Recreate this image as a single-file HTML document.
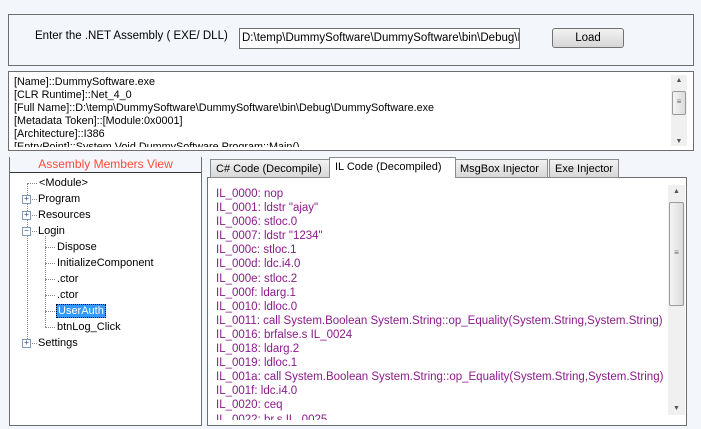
<!DOCTYPE html>
<html><head><style>
body{margin:0;width:701px;height:429px;background:#f3f6fb;font-family:"Liberation Sans",sans-serif;position:relative;overflow:hidden;font-size:11px;color:#000}
.a{position:absolute}
.box{position:absolute;border:1px solid #6e6e6e;box-sizing:border-box}
.sb{position:absolute;background:#f0f0f0}
.arr{position:absolute;left:0;width:100%;text-align:center;font-size:7px;color:#555}
.thumb{position:absolute;left:1px;right:1px;border:1px solid #9a9a9a;border-radius:2px;background:linear-gradient(90deg,#f4f4f4,#dcdcdc)}
.tab{position:absolute;top:159px;height:19px;border:1px solid #8c8c8c;background:linear-gradient(#f2f2f2,#d8d8d8);box-sizing:border-box;font-size:11px;padding:3px 0 0 5px;white-space:nowrap}
.code div{height:14.1px;line-height:14px;white-space:nowrap}
.tr{position:absolute;font-size:11px;white-space:nowrap}
.pm{position:absolute;width:7px;height:7px;border:1px solid #7f9db9;background:#fff;font-size:8px;line-height:6px;text-align:center;color:#1a3c8c}
.dv{position:absolute;border-left:1px dotted #888}
.dh{position:absolute;border-top:1px dotted #888}
</style></head><body>
<div class="box" style="left:8px;top:14px;width:686px;height:52px"></div>
<div class="a" style="left:35px;top:30px;font-size:11.5px">Enter the .NET Assembly ( EXE/ DLL)</div>
<div class="box" style="left:239px;top:28px;width:281px;height:21px;background:#fff;padding:3px 0 0 2px;overflow:hidden;white-space:nowrap;font-size:11.5px">D:\temp\DummySoftware\DummySoftware\bin\Debug\Du</div>
<div class="a" style="left:552px;top:28px;width:72px;height:20px;border:1px solid #707070;border-radius:3px;background:linear-gradient(#f2f2f2,#d6d6d6);box-sizing:border-box;text-align:center;line-height:18px;font-size:11.5px">Load</div>

<div class="box" style="left:8px;top:71px;width:686px;height:80px;background:#fff"></div>
<div class="a" style="left:14px;top:76px;line-height:13px;font-size:10.8px;height:71px;overflow:hidden;white-space:nowrap">[Name]::DummySoftware.exe<br>[CLR Runtime]::Net_4_0<br>[Full Name]::D:\temp\DummySoftware\DummySoftware\bin\Debug\DummySoftware.exe<br>[Metadata Token]::[Module:0x0001]<br>[Architecture]::I386<br>[EntryPoint]::System.Void DummySoftware.Program::Main()</div>
<div class="sb" style="left:671px;top:75px;width:16px;height:71px"><div class="arr" style="top:2px">▲</div><div class="thumb" style="top:16px;height:22px;text-align:center;font-size:8px;line-height:20px;color:#666">≡</div><div class="arr" style="bottom:1px">▼</div></div>

<div class="box" style="left:9px;top:157px;width:193px;height:269px;background:#fff"></div>
<div class="a" style="left:10px;top:157px;width:191px;height:15px;background:#f3f6fb;border-bottom:1px solid #333;text-align:center;color:#ff4a3a;font-size:12px;line-height:15px">Assembly Members View</div>
<div class="dv" style="left:27px;top:183px;height:162px"></div>
<div class="dh" style="left:27px;top:183px;width:10px"></div>
<div class="tr" style="left:39px;top:177px">&lt;Module&gt;</div>
<div class="pm" style="left:22px;top:195px">+</div><div class="dh" style="left:32px;top:199px;width:5px"></div><div class="tr" style="left:38px;top:193px">Program</div>
<div class="pm" style="left:22px;top:211px">+</div><div class="dh" style="left:32px;top:215px;width:5px"></div><div class="tr" style="left:38px;top:209px">Resources</div>
<div class="pm" style="left:22px;top:227px">−</div><div class="dh" style="left:32px;top:231px;width:5px"></div><div class="tr" style="left:38px;top:225px">Login</div>
<div class="dv" style="left:45px;top:236px;height:91px"></div>
<div class="dh" style="left:45px;top:247px;width:10px"></div><div class="tr" style="left:57px;top:241px">Dispose</div>
<div class="dh" style="left:45px;top:263px;width:10px"></div><div class="tr" style="left:57px;top:257px">InitializeComponent</div>
<div class="dh" style="left:45px;top:279px;width:10px"></div><div class="tr" style="left:57px;top:273px">.ctor</div>
<div class="dh" style="left:45px;top:295px;width:10px"></div><div class="tr" style="left:57px;top:289px">.ctor</div>
<div class="dh" style="left:45px;top:311px;width:10px"></div><div class="tr" style="left:56px;top:304px;background:#3399ff;color:#fff;border:1px dotted #000;padding:0 1px">UserAuth</div>
<div class="dh" style="left:45px;top:327px;width:10px"></div><div class="tr" style="left:57px;top:321px">btnLog_Click</div>
<div class="pm" style="left:22px;top:339px">+</div><div class="dh" style="left:32px;top:343px;width:5px"></div><div class="tr" style="left:38px;top:337px">Settings</div>

<div class="box" style="left:207px;top:177px;width:480px;height:249px;background:#fff"></div>
<div class="tab" style="left:210px;width:121px">C# Code (Decompile)</div>
<div class="tab" style="left:454px;width:94px">MsgBox Injector</div>
<div class="tab" style="left:549px;width:70px">Exe Injector</div>
<div class="tab" style="left:329px;top:157px;height:21px;width:127px;background:#fff;border-bottom:none;padding-top:3px">IL Code (Decompiled)</div>
<div class="a code" style="left:216px;top:187px;color:#8b1a8b;font-size:11.5px;height:233px;overflow:hidden">
<div>IL_0000: nop</div><div>IL_0001: ldstr "ajay"</div><div>IL_0006: stloc.0</div><div>IL_0007: ldstr "1234"</div><div>IL_000c: stloc.1</div><div>IL_000d: ldc.i4.0</div><div>IL_000e: stloc.2</div><div>IL_000f: ldarg.1</div><div>IL_0010: ldloc.0</div><div>IL_0011: call System.Boolean System.String::op_Equality(System.String,System.String)</div><div>IL_0016: brfalse.s IL_0024</div><div>IL_0018: ldarg.2</div><div>IL_0019: ldloc.1</div><div>IL_001a: call System.Boolean System.String::op_Equality(System.String,System.String)</div><div>IL_001f: ldc.i4.0</div><div>IL_0020: ceq</div><div>IL_0022: br.s IL_0025</div></div>
<div class="sb" style="left:668px;top:185px;width:17px;height:230px"><div class="arr" style="top:3px">▲</div><div class="thumb" style="top:17px;height:102px;text-align:center;font-size:8px;line-height:100px;color:#666">≡</div><div class="arr" style="bottom:3px">▼</div></div>
</body></html>
